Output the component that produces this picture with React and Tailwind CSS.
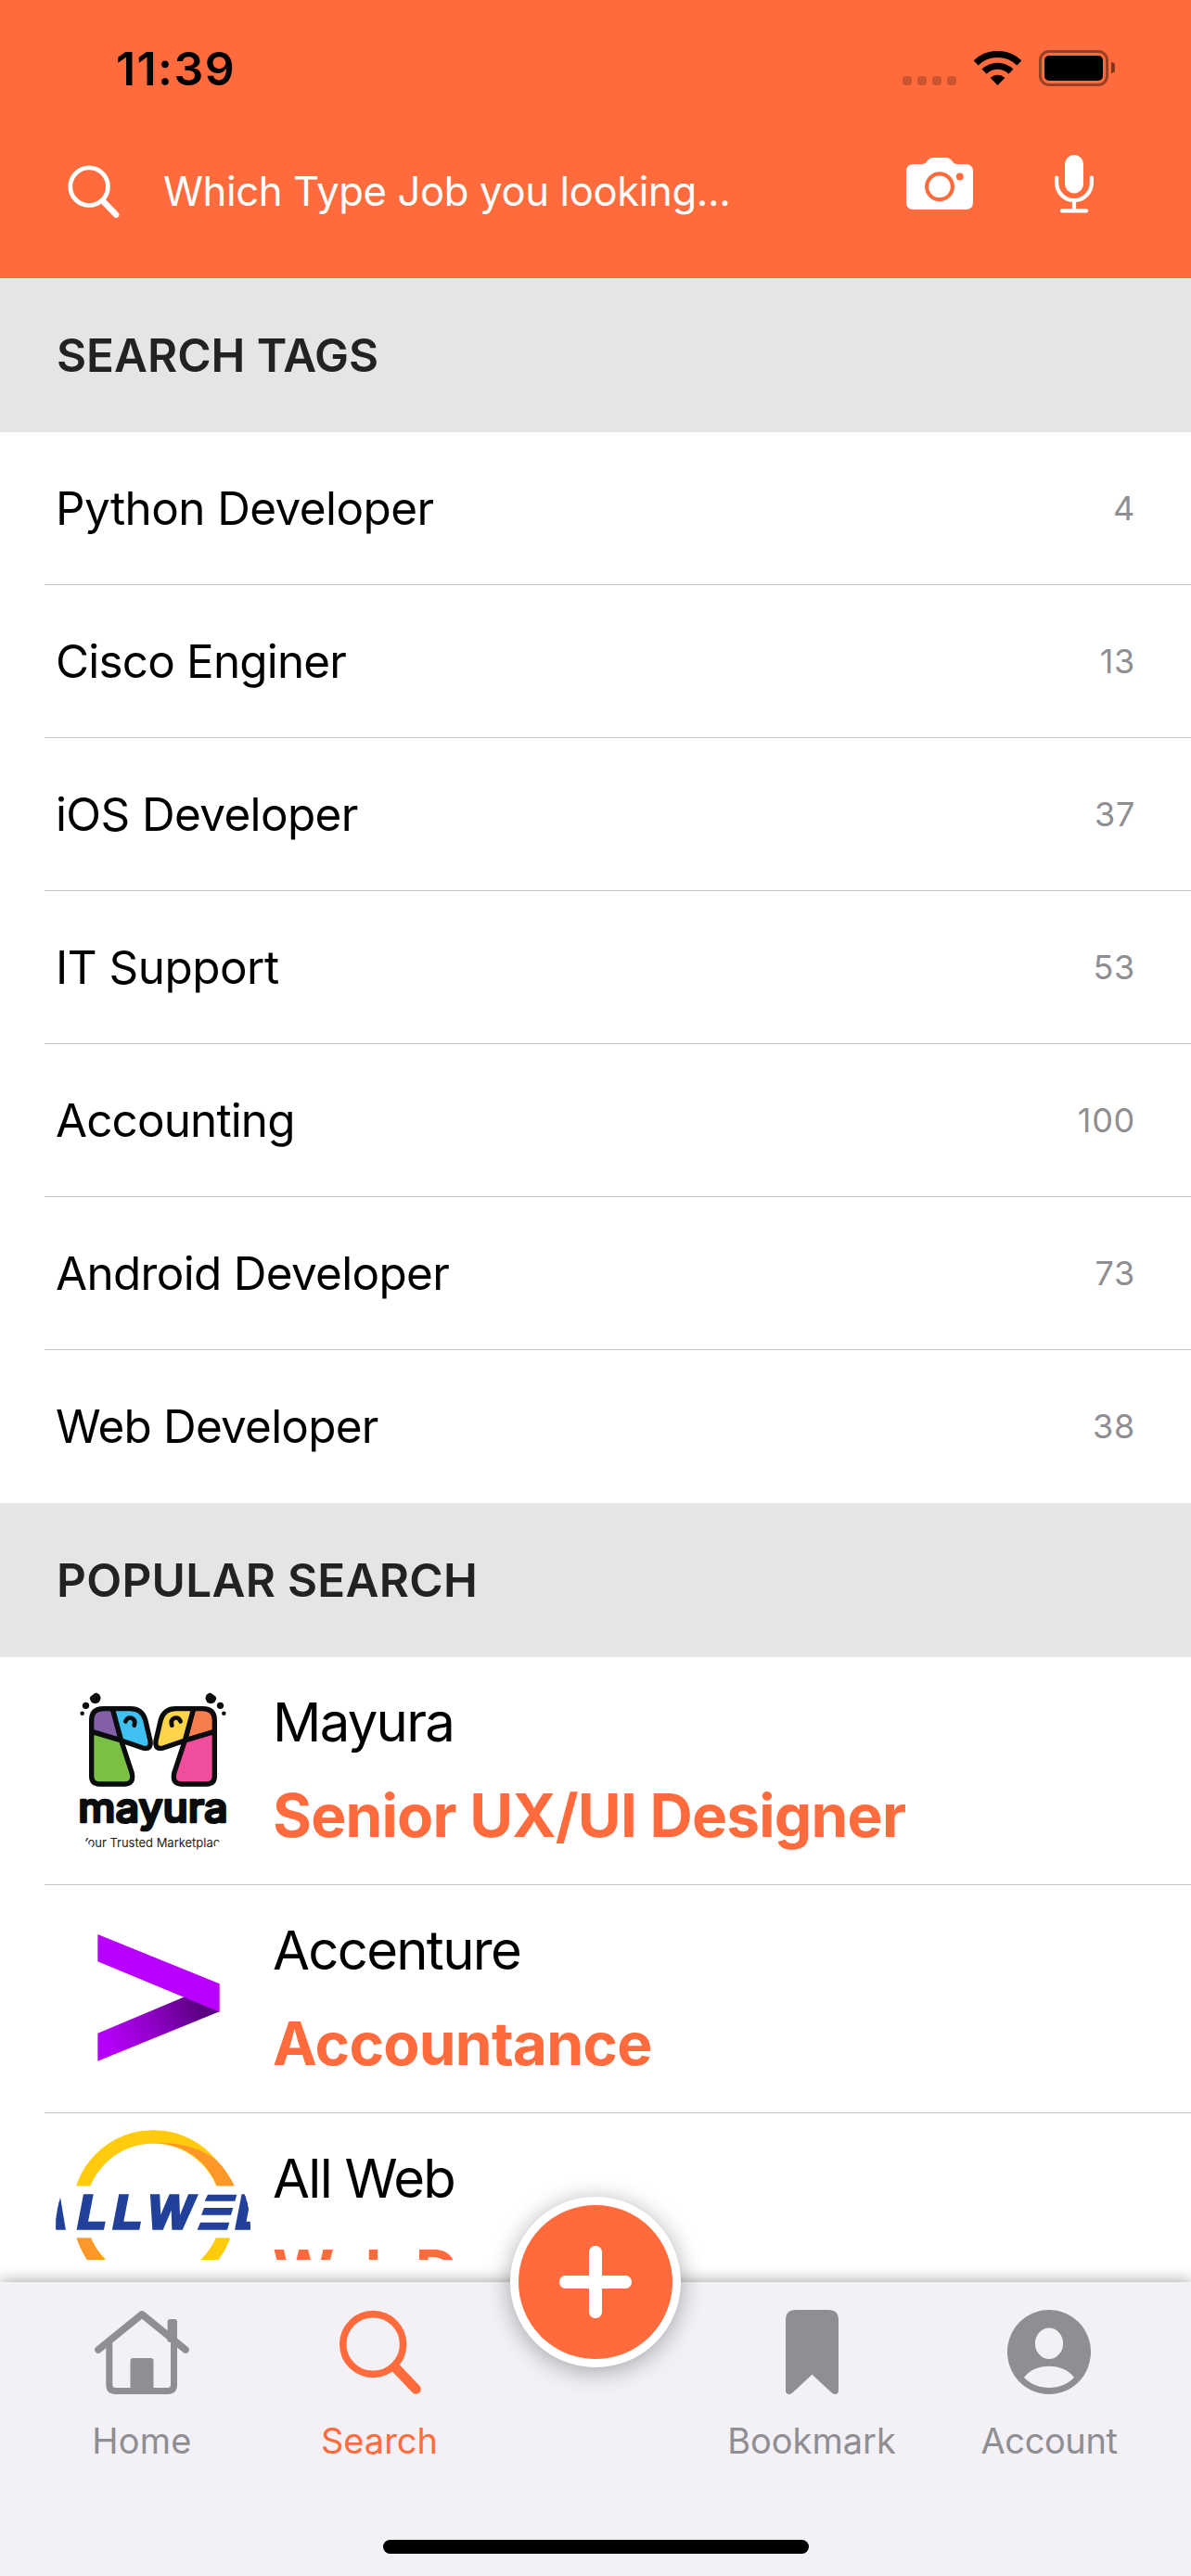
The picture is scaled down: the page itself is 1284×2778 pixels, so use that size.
const TAGS = [
  { label: "Python Developer", count: 4, tracking: "tracking-[-0.55px]" },
  { label: "Cisco Enginer", count: 13, tracking: "tracking-[-0.8px]" },
  { label: "iOS Developer", count: 37, tracking: "tracking-[-0.6px]" },
  { label: "IT Support", count: 53, tracking: "tracking-[-0.5px]" },
  { label: "Accounting", count: 100, tracking: "tracking-[-0.85px]" },
  { label: "Android Developer", count: 73, tracking: "tracking-[-0.65px]" },
  { label: "Web Developer", count: 38, tracking: "tracking-[-0.75px]" },
];

function SearchIcon({ className }) {
  return (
    <svg className={className} viewBox="0 0 88 91" fill="none" stroke="currentColor">
      <circle cx="36.2" cy="37" r="32.4" strokeWidth="7.6" />
      <path d="M61 63 L82.5 85.5" strokeWidth="10.5" strokeLinecap="round" />
    </svg>
  );
}

function StatusBar() {
  return (
    <div className="flex h-[146px] items-center justify-between pr-[82px] pl-[125px]">
      <span className="pt-[2px] text-[50px] leading-none font-semibold tracking-[1.4px] text-black">11:39</span>
      <div className="flex items-end">
        <div className="mr-[19px] mb-px flex gap-[6px]">
          <i className="size-[10px] rounded-[3px] bg-black/20" />
          <i className="size-[10px] rounded-[3px] bg-black/20" />
          <i className="size-[10px] rounded-[3px] bg-black/20" />
          <i className="size-[10px] rounded-[3px] bg-black/20" />
        </div>
        <svg className="mr-[19px] mb-px h-[37px] w-[51px]" viewBox="0 0 51 37" fill="none" stroke="black">
          <path d="M2.2 12.9 A33.5 33.5 0 0 1 48.8 12.9" strokeWidth="7.2" />
          <path d="M11.1 22.1 A20.7 20.7 0 0 1 39.9 22.1" strokeWidth="7.2" />
          <path d="M25.5 37 L17.7 28.9 A11.4 11.4 0 0 1 33.3 28.9 Z" fill="black" stroke="none" />
        </svg>
        <div className="flex items-center gap-[3px]">
          <div className="h-[39px] w-[75px] rounded-[11px] border-[3px] border-black/40 p-[3px]">
            <div className="h-full w-full rounded-[5px] bg-black" />
          </div>
          <div className="h-[12px] w-[4px] rounded-r-full bg-black/50" />
        </div>
      </div>
    </div>
  );
}

function SearchBar() {
  return (
    <div className="flex h-[120px] items-center pr-[105px] pl-[73px] text-white">
      <SearchIcon className="h-[57px] w-[56px]" />
      <span className="ml-[47px] flex-1 pt-px text-[43.6px] leading-none tracking-[-0.36px] whitespace-nowrap">
        Which Type Job you looking...
      </span>
      <div className="mb-[16px] flex items-center gap-[88px]">
        <svg className="h-[56px] w-[72px]" viewBox="0 0 72 56">
          <path
            d="M8 7 H17 Q20 7 21.500 5 L24 2 Q26 0 29 0 H43 Q46 0 48 2 L50.500 5 Q52 7 55 7 H64 Q72 7 72 15 V48 Q72 56 64 56 H8 Q0 56 0 48 V15 Q0 7 8 7 Z"
            fill="white"
          />
          <circle cx="36" cy="31.300" r="13.900" fill="none" stroke="#ff6b3d" strokeWidth="4.200" />
          <circle cx="57.800" cy="20.500" r="3.900" fill="#ff6b3d" />
        </svg>
        <svg className="h-[63px] w-[42px]" viewBox="0 0 42 63" fill="none" stroke="white" strokeLinecap="round">
          <rect x="11" y="0" width="20" height="41.500" rx="10" fill="white" stroke="none" />
          <path d="M2.100 24.500 V30 A18.900 19 0 0 0 39.900 30 V24.500" strokeWidth="4.200" />
          <path d="M21 50 V59" strokeWidth="4.200" />
          <path d="M8.200 60.300 H33.800" strokeWidth="4.600" />
        </svg>
      </div>
    </div>
  );
}

function SectionHeader({ children, className }) {
  return (
    <div className="flex h-[166px] items-center bg-[#e5e5e5] pt-[2px] pl-[61px]">
      <h2 className={`text-[49.4px] leading-none font-semibold text-[#222222] ${className}`}>{children}</h2>
    </div>
  );
}

function MayuraBird({ neck, face, body }) {
  return (
    <g stroke="#0a0c0d" strokeWidth="16" strokeLinejoin="round">
      <path d="M86 172 V136 Q86 98 124 98 H154 L182 201 Z" fill={neck} />
      <path d="M154 98 H212 Q249 98 260 134 L276 202 Q280 232 252 225 L182 201 Z" fill={face} />
      <path d="M86 172 L182 201 L217 307 Q223 342 194 342 H112 Q86 342 86 316 Z" fill={body} />
      <path d="M196 139 Q202 125 215 128 Q230 134 224 152" fill="none" strokeWidth="14" strokeLinecap="round" />
      <g fill="#0a0c0d" stroke="none">
        <circle cx="98" cy="64" r="17.500" />
        <circle cx="67.500" cy="88" r="11" />
        <circle cx="56" cy="113" r="6.800" />
      </g>
    </g>
  );
}

function MayuraLogo() {
  return (
    <svg className="size-full" viewBox="-30 -15 630 630">
      <MayuraBird neck="#835fa6" face="#3ec0f0" body="#79c045" />
      <g transform="translate(570 0) scale(-1 1)">
        <MayuraBird neck="#f57d4b" face="#ffd44a" body="#f04e9c" />
      </g>
      <text
        x="43"
        y="464"
        className="font-[Inter] text-[130px] font-medium"
        fill="#0a0c0d"
        stroke="#0a0c0d"
        strokeWidth="8"
        strokeLinejoin="round"
        textLength="484"
        lengthAdjust="spacingAndGlyphs"
      >
        mayura
      </text>
      <text
        x="50"
        y="545"
        className="font-[Inter] text-[40px] font-normal"
        fill="#222222"
        textLength="474"
        lengthAdjust="spacingAndGlyphs"
      >
        Your Trusted Marketplace
      </text>
    </svg>
  );
}

function AccentureLogo() {
  return (
    <svg className="size-full" viewBox="32 63 630 630">
      <defs>
        <linearGradient id="fold" gradientUnits="userSpaceOnUse" x1="210" y1="540" x2="500" y2="400">
          <stop offset="0" stopColor="#b400f8" />
          <stop offset="0.5" stopColor="#8e00c4" />
          <stop offset="1" stopColor="#5a0080" />
        </linearGradient>
      </defs>
      <path d="M450 370 L168 488 V578 L562 418 Z" fill="url(#fold)" />
      <path d="M168 168 L562 328 V419 L168 256 Z" fill="#b900ff" />
    </svg>
  );
}

function AllWebLogo() {
  return (
    <svg className="size-full" viewBox="30 51 630 630">
      <circle cx="346" cy="314" r="241" fill="none" stroke="#ffcb0a" strokeWidth="44" />
      <path d="M360 94 Q470 88 552 150 Q590 190 612 240 H556 Q500 105 360 94 Z" fill="#fd9727" />
      <path d="M94 390 Q130 500 200 540 L230 505 Q165 460 140 390 Z" fill="#fd9727" />
      <rect x="0" y="232" width="700" height="168" fill="white" />
      <g
        className="font-['Liberation_Sans'] text-[152px] font-bold italic"
        fill="#21409a"
        stroke="#21409a"
        strokeWidth="10"
      >
        <text x="-42 101 216 330" y="369">
          ALLW
        </text>
        <text x="613" y="369">
          L
        </text>
      </g>
      <g fill="#21409a">
        <path d="M522 260 H616 L610 281 H512 Z" />
        <path d="M510 303 H604 L597 326 H501 Z" />
        <path d="M498 350 H592 L585 374 H488 Z" />
      </g>
    </svg>
  );
}

const COMPANIES = [
  { name: "Mayura", title: "Senior UX/UI Designer", Logo: MayuraLogo },
  { name: "Accenture", title: "Accountance", Logo: AccentureLogo },
  { name: "All Web", title: "Web Developer", Logo: AllWebLogo },
];

function CompanyRow({ company }) {
  const { name, title, Logo } = company;
  return (
    <li className="ml-[48px] flex h-[246px] shrink-0 border-b border-[#c6c6c8] pl-[12px]">
      <div className="mt-[18px] size-[210px] shrink-0 overflow-hidden rounded-full">
        <Logo />
      </div>
      <div className="ml-[24px] pt-[30px] whitespace-nowrap">
        <p className="text-[58px] leading-[80px] tracking-[-1.7px] text-black">{name}</p>
        <p className="text-[64px] leading-[121px] font-bold tracking-[-0.78px] text-[#ff6b3d]">{title}</p>
      </div>
    </li>
  );
}

function HomeIcon() {
  return (
    <svg className="h-[91px] w-[102px]" viewBox="0 0 102 91" fill="none" stroke="currentColor">
      <path d="M4 43 L51 4.800 L98 43" strokeWidth="7.600" strokeLinecap="round" strokeLinejoin="round" />
      <path d="M15.800 36 V80.500 Q15.800 87.500 22.800 87.500 H78.500 Q85.500 87.500 85.500 80.500 V36" strokeWidth="7" />
      <path d="M78.600 34 V13 Q78.600 10 81.600 10 H86 Q89 10 89 13 V38 Z" fill="currentColor" stroke="none" />
      <rect x="38.500" y="52" width="25" height="38" rx="3" fill="currentColor" stroke="none" />
    </svg>
  );
}

function BookmarkIcon() {
  return (
    <svg className="h-[91px] w-[57px]" viewBox="0 0 57 91" fill="currentColor">
      <path d="M11 0 H46 Q57 0 57 11 V87 Q57 91 53 91 Q51 91 49.500 89.200 L28.500 69.700 L7.500 89.200 Q6 91 4 91 Q0 91 0 87 V11 Q0 0 11 0 Z" />
    </svg>
  );
}

function AccountIcon() {
  return (
    <svg className="h-[91px] w-[90px]" viewBox="0 0 90 91">
      <ellipse cx="45" cy="45.500" rx="45" ry="45.500" fill="currentColor" />
      <ellipse cx="45" cy="36.300" rx="15.100" ry="16.700" fill="#f3f1f6" />
      <path d="M18 73 C29 56.500 61 56.500 72 73 C58 87.700 32 87.700 18 73 Z" fill="#f3f1f6" />
    </svg>
  );
}

function Tab({ label, tracking, active, children }) {
  return (
    <div className={`flex flex-col items-center ${active ? "text-[#ff6b3d]" : "text-[#8e8e93]"}`}>
      {children}
      <span className={`mt-[21px] text-[38px] leading-[58px] ${tracking}`}>{label}</span>
    </div>
  );
}

function TabBar() {
  return (
    <nav className="relative flex h-[317px] flex-col items-center justify-between bg-[#f3f1f6] pb-[24px] shadow-[0_0_16px_rgba(0,0,0,0.4)]">
      <div className="grid w-full grid-cols-[256px_256px_210px_256px_256px] px-[25px] pt-[30px]">
        <Tab label="Home" tracking="tracking-[0.2px]">
          <HomeIcon />
        </Tab>
        <Tab label="Search" tracking="tracking-normal" active>
          <SearchIcon className="ml-[2px] h-[91px] w-[88px]" />
        </Tab>
        <span />
        <Tab label="Bookmark" tracking="tracking-normal">
          <BookmarkIcon />
        </Tab>
        <Tab label="Account" tracking="tracking-[-0.4px]">
          <AccountIcon />
        </Tab>
      </div>
      <div className="h-[15px] w-[459px] rounded-full bg-black" />
      <button className="absolute -top-[92px] left-[550px] flex size-[184px] items-center justify-center rounded-full border-[9px] border-white bg-[#ff6b3d] shadow-[0_4px_26px_rgba(0,0,0,0.33)]">
        <svg className="size-[78px]" viewBox="0 0 78 78" fill="white">
          <rect x="0" y="32" width="78" height="14" rx="6.500" />
          <rect x="32" y="0" width="14" height="78" rx="6.500" />
        </svg>
      </button>
    </nav>
  );
}

export default function App() {
  return (
    <div className="flex h-[2778px] w-[1284px] flex-col overflow-hidden bg-white font-[Inter,sans-serif]">
      <header className="h-[300px] shrink-0 bg-[#ff6b3d]">
        <StatusBar />
        <SearchBar />
      </header>
      <main className="h-[2137px] shrink-0 overflow-hidden">
        <SectionHeader className="tracking-normal">SEARCH TAGS</SectionHeader>
        <ul>
          {TAGS.map((tag) => (
            <li
              key={tag.label}
              className="ml-[48px] flex h-[165px] items-center justify-between border-b border-[#c6c6c8] pr-[60px] pl-[12px] last:border-transparent"
            >
              <span className={`pt-px text-[49.4px] leading-none text-black ${tag.tracking}`}>{tag.label}</span>
              <span className="text-[36px] leading-none tracking-[0.7px] text-[#8e8e93]">{tag.count}</span>
            </li>
          ))}
        </ul>
        <SectionHeader className="tracking-[0.3px]">POPULAR SEARCH</SectionHeader>
        <ul>
          {COMPANIES.map((company) => (
            <CompanyRow key={company.name} company={company} />
          ))}
        </ul>
      </main>
      <div className="h-[24px] shrink-0" />
      <TabBar />
    </div>
  );
}
